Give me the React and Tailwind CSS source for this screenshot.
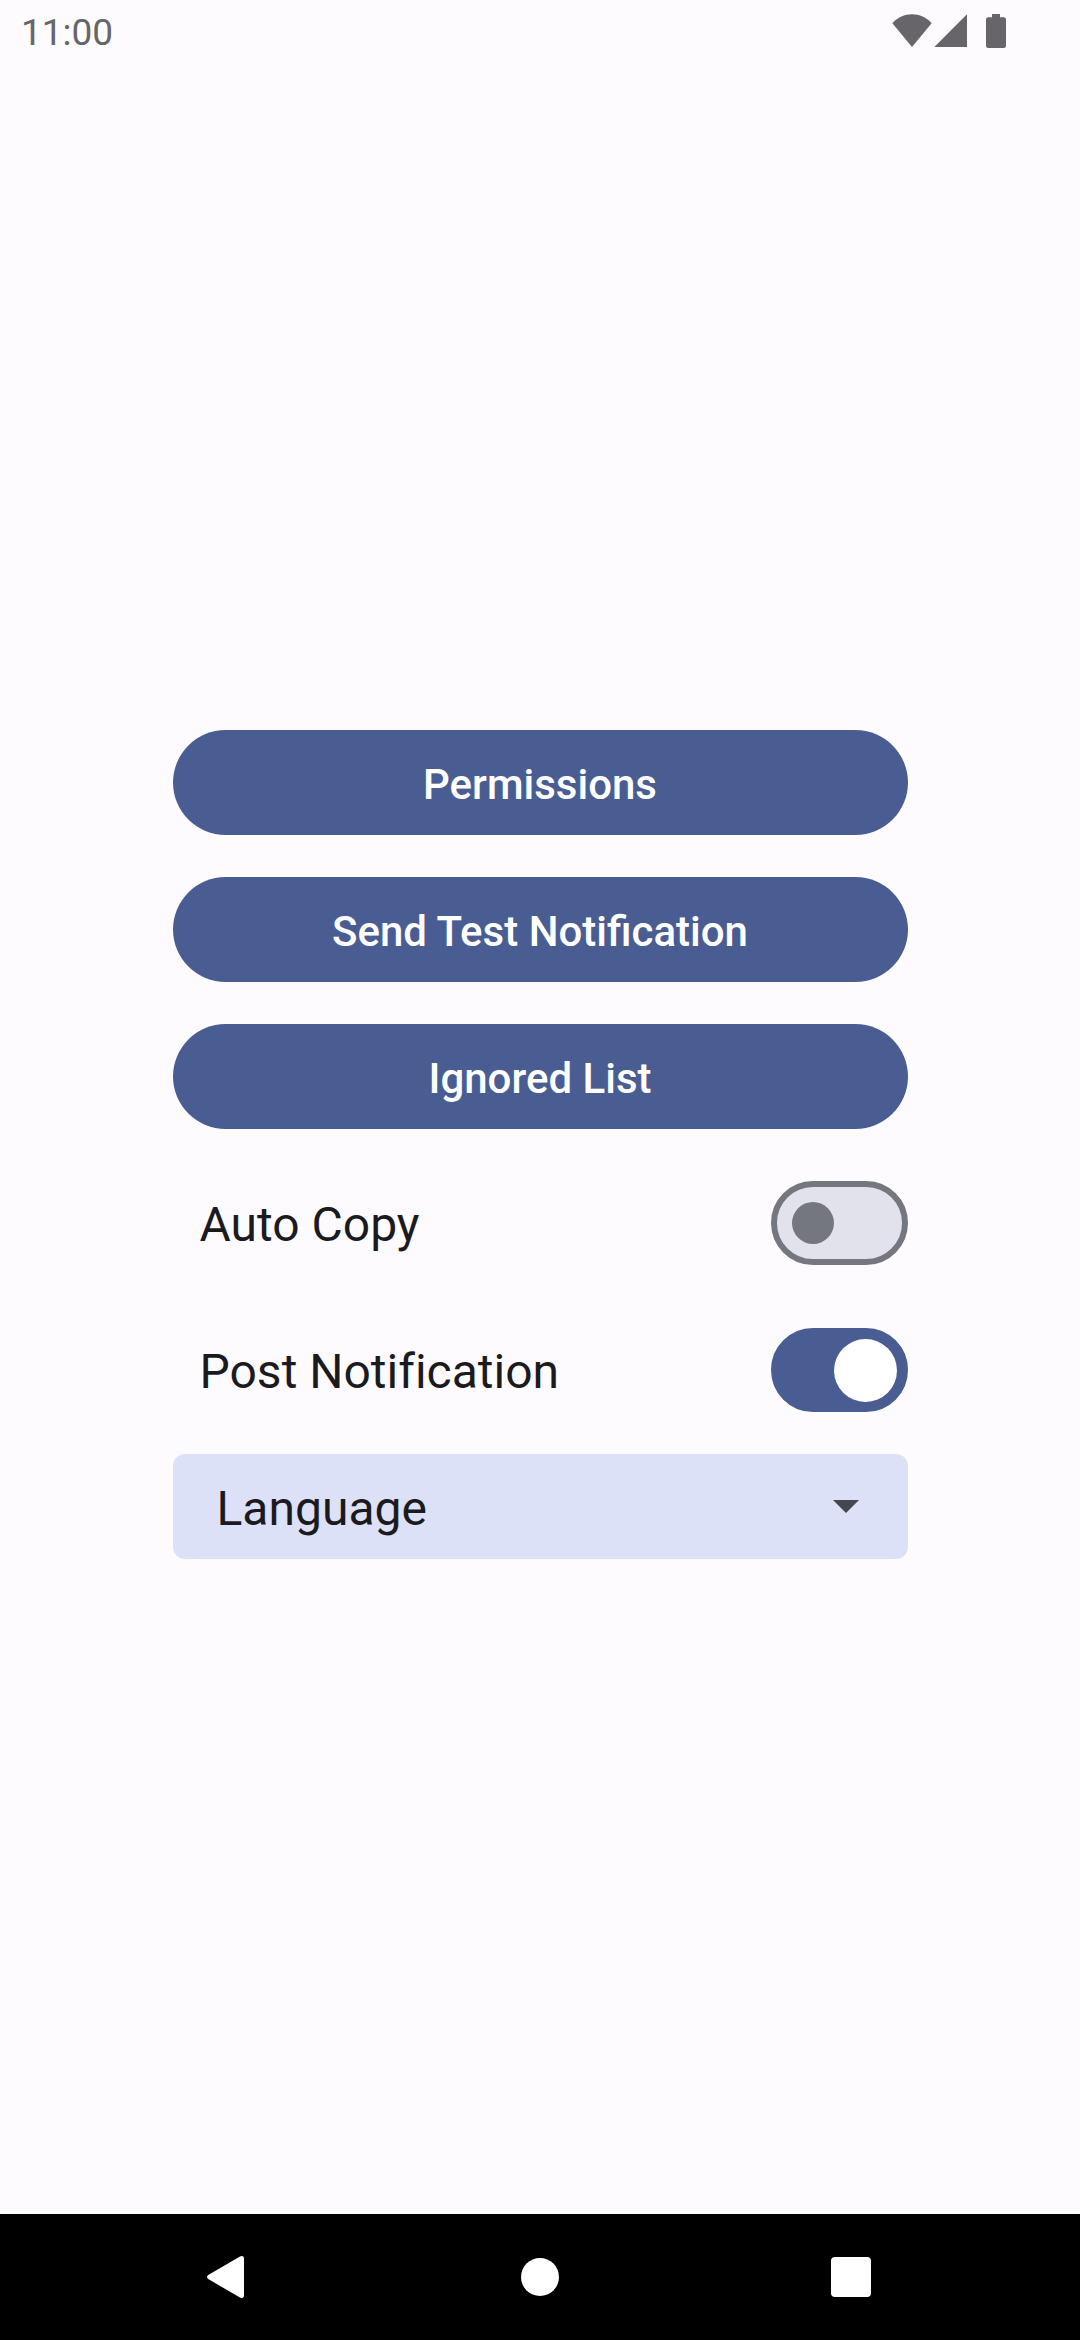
import { useState } from "react";

function StatusBar() {
  return (
    <header className="flex h-[63px] items-center justify-between pl-[21px] pr-[74px] text-[#67656a]">
      <time className="pt-0.5 text-[37px] leading-[44px]">11:00</time>
      <div className="flex items-center pb-0.5">
        <svg className="h-[34px] w-[40px]" viewBox="0 0 40 34" fill="currentColor" aria-label="Wi-Fi">
          <path d="M20 33 0.4 9.2C5.800 3.400 12.500 0.300 20 0.300S34.200 3.400 39.600 9.200Z" />
        </svg>
        <svg className="ml-[2px] h-[34px] w-[34px]" viewBox="0 0 34 34" fill="currentColor" aria-label="Signal">
          <path d="M33 0.300V33H0.300Z" />
        </svg>
        <svg className="ml-[18px] h-[34px] w-[20px]" viewBox="0 0 20 34" fill="currentColor" aria-label="Battery">
          <path d="M6 0h8v3.300h3.700A2.300 2.300 0 0 1 20 5.600v26A2.300 2.300 0 0 1 17.700 34H2.300A2.300 2.300 0 0 1 0 31.600v-26A2.300 2.300 0 0 1 2.300 3.300H6Z" />
        </svg>
      </div>
    </header>
  );
}

function FilledButton({ children }) {
  return (
    <button
      type="button"
      className="h-[105px] w-full rounded-full bg-[#4a5d92] pt-1 text-center text-[42px] font-medium leading-[50px] text-white"
    >
      {children}
    </button>
  );
}

function SwitchRow({ id, label, initial }) {
  const [on, setOn] = useState(initial);
  return (
    <div className="flex h-[84px] items-center justify-between pl-[27px]">
      <label htmlFor={id} className="pt-1 text-[48px] leading-[56px] [font-variant-ligatures:none]">
        {label}
      </label>
      <span className="grid h-[84px] w-[137px] shrink-0 items-center">
        <input
          id={id}
          type="checkbox"
          role="switch"
          checked={on}
          onChange={(e) => setOn(e.target.checked)}
          className="peer col-start-1 row-start-1 h-[84px] w-[137px] appearance-none rounded-full border-[6px] border-[#757780] bg-[#e2e2ec] checked:border-[#4a5d92] checked:bg-[#4a5d92]"
        />
        <span className="pointer-events-none col-start-1 row-start-1 ml-[21px] size-[42px] rounded-full bg-[#757780] peer-checked:ml-[63px] peer-checked:size-[63px] peer-checked:bg-white" />
      </span>
    </div>
  );
}

function LanguageSelect() {
  return (
    <div className="mt-[42px] grid items-center">
      <select
        aria-label="Language"
        className="col-start-1 row-start-1 h-[105px] w-full appearance-none rounded-[12px] bg-[#dde1f8] pl-11 pr-[105px] pt-1 text-[48px] leading-[56px]"
      >
        <option>Language</option>
      </select>
      <svg
        className="pointer-events-none col-start-1 row-start-1 mr-[49px] h-[13px] w-[26px] justify-self-end"
        viewBox="0 0 26 13"
        fill="#45464f"
        aria-hidden="true"
      >
        <path d="M0 0h26L13 13Z" />
      </svg>
    </div>
  );
}

function NavButton({ label, children }) {
  return (
    <button type="button" aria-label={label} className="flex h-[126px] w-[104px] items-center justify-center">
      <svg className="size-[64px]" viewBox="0 0 64 64" fill="white" aria-hidden="true">
        {children}
      </svg>
    </button>
  );
}

export default function App() {
  return (
    <div className="flex min-h-screen flex-col bg-[#fefbff] font-[Roboto,sans-serif] text-[#1b1b1f]">
      <StatusBar />
      <main className="flex flex-1 flex-col items-center justify-center px-6 pt-3">
        <div className="w-full max-w-[735px]">
          <div className="flex flex-col gap-[42px]">
            <FilledButton>Permissions</FilledButton>
            <FilledButton>Send Test Notification</FilledButton>
            <FilledButton>Ignored List</FilledButton>
          </div>
          <div className="mt-[52px] flex flex-col gap-[63px]">
            <SwitchRow id="auto-copy" label="Auto Copy" initial={false} />
            <SwitchRow id="post-notification" label="Post Notification" initial={true} />
          </div>
          <LanguageSelect />
        </div>
      </main>
      <nav className="flex h-[126px] items-center justify-center gap-[208px] bg-black">
        <NavButton label="Back">
          <path d="M12.200 30 44 11.400Q48 9.800 48 14V50Q48 54.200 44 52.600L12.200 34Q9.800 32 12.200 30Z" />
        </NavButton>
        <NavButton label="Home">
          <circle cx="32" cy="32" r="19" />
        </NavButton>
        <NavButton label="Recent apps">
          <rect x="11" y="12" width="40" height="40" rx="4" />
        </NavButton>
      </nav>
    </div>
  );
}
